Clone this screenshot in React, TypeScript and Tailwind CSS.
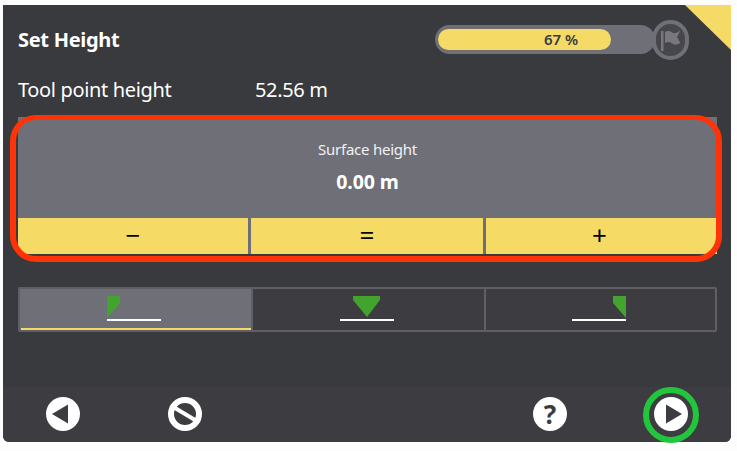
export default function App() {
  const Mark = ({ side }: { side: "l" | "c" | "r" }) => (
    <svg width="56" height="26" viewBox="0 0 56 26" className="block">
      {side === "l" && <polygon points="1,0 14,0 14,7 1,22" fill="#43a32f" />}
      {side === "c" && <polygon points="14,0 41,0 41,4 28,21 14,4" fill="#43a32f" />}
      {side === "r" && <polygon points="42,0 55,0 55,22 42,7" fill="#43a32f" />}
      <rect x="1" y="23" width="54" height="2" fill="#ffffff" />
    </svg>
  );
  return (
    <div className="relative w-[737px] h-[451px] overflow-hidden bg-[#fdfdfd] pt-[5px] pl-[3px] font-['Noto_Sans',sans-serif]">
      <div className="relative w-[728px] h-[437px] bg-[#393a3e] rounded-bl-[6px] rounded-br-[6px] overflow-hidden flex flex-col">
        <svg width="46" height="45" viewBox="0 0 46 45" className="absolute top-0 right-0">
          <polygon points="0,0 46,0 46,45" fill="#f5db66" />
        </svg>
        <div className="flex items-center h-[70px] pl-[15px]">
          <div className="text-[20px] leading-none font-bold text-white tracking-[-0.3px] w-[417px]">Set Height</div>
          <div className="relative w-[220px] h-[29px] rounded-full bg-[#6f6f78] mt-[-1px] pl-[3px] pt-[4px]">
            <div className="w-[173px] h-[21px] rounded-full bg-[#f5db66] flex items-center justify-center pl-[73px] text-[15px] font-semibold text-[#3a3a3e]">67 %</div>
            <div className="absolute right-[-34px] top-[-5px] w-[37px] h-[40px] rounded-full border-[4px] border-[#6f6f78] bg-[#46464b] flex items-center justify-center">
              <svg width="22" height="24" viewBox="0 0 22 24">
                <rect x="1" y="3" width="2.5" height="20" fill="#77777f" />
                <path d="M5 4 Q9 2 12 4.5 Q16 7 20.5 2 L17 9 L20.5 15 Q15 18 12 15.5 Q9 13 5 15 Z" fill="#77777f" />
              </svg>
            </div>
          </div>
        </div>
        <div className="flex items-center h-[30px] pl-[15px] text-[20px] leading-none text-white tracking-[-0.35px]">
          <div className="w-[237px]">Tool point height</div>
          <div>52.56 m</div>
        </div>
        <div className="ml-[15px] mt-[12px] w-[699px] h-[137px] flex flex-col">
          <div className="h-[101px] bg-[#6f6f78] flex flex-col items-center text-white">
            <div className="mt-[25px] text-[15px] leading-none tracking-[-0.25px] text-[#f2f2f2]">Surface height</div>
            <div className="mt-[15px] text-[19.5px] leading-none font-bold tracking-[-0.1px]">0.00 m</div>
          </div>
          <div className="h-[36px] flex gap-[3px] bg-[#6f6f78] text-black text-[26px] leading-none">
            <div className="w-[230px] bg-[#f5db66] flex items-center justify-center pb-[3px]">−</div>
            <div className="w-[232px] bg-[#f5db66] flex items-center justify-center pb-[3px]">=</div>
            <div className="flex-1 bg-[#f5db66] flex items-center justify-center pb-[3px] pr-[4px]">+</div>
          </div>
        </div>
        <div className="ml-[15px] mt-[33px] w-[699px] h-[45px] flex border-2 border-[#5f5f65] rounded-[2px] bg-[#3d3c40]">
          <div className="w-[231px] bg-[#6f6f78] flex flex-col items-center">
            <div className="mt-[7px] h-[27px] mr-[3px]"><Mark side="l" /></div>
            <div className="mt-[5px] w-[230px] h-[2px] bg-[#f5db66]" />
          </div>
          <div className="w-[233px] border-l-2 border-[#5f5f65] flex justify-center pt-[7px] pr-[3px]"><Mark side="c" /></div>
          <div className="flex-1 border-l-2 border-[#5f5f65] flex justify-center pt-[7px] pr-[3px]"><Mark side="r" /></div>
        </div>
        <div className="mt-auto h-[55px] bg-[#3d3c40] relative flex items-center pl-[43px] pb-[1px]">
          <svg width="34" height="34" viewBox="0 0 34 34" className="shrink-0">
            <circle cx="17" cy="17" r="17" fill="#fff" />
            <polygon points="6,17 22,7.5 22,26.5" fill="#3d3c40" />
          </svg>
          <svg width="34" height="34" viewBox="0 0 34 34" className="shrink-0 ml-[88px]">
            <circle cx="17" cy="17" r="14" fill="none" stroke="#fff" strokeWidth="6" />
            <line x1="7" y1="11" x2="27" y2="23" stroke="#fff" strokeWidth="4" />
          </svg>
          <div className="shrink-0 ml-[331px] w-[34px] h-[34px] rounded-full bg-white flex items-center justify-center text-[26px] leading-[34px] font-bold text-[#3d3c40]">?</div>
          <svg width="34" height="34" viewBox="0 0 34 34" className="shrink-0 ml-[87px]">
            <circle cx="17" cy="17" r="17" fill="#fff" />
            <polygon points="28,17 12,7.5 12,26.5" fill="#3d3c40" />
          </svg>
        </div>
      </div>
      <div className="absolute left-[10px] top-[115px] w-[712px] h-[147px] border-x-[6px] border-t-[5px] border-b-[6px] border-[#ff3308] rounded-[26px] pointer-events-none" />
      <div className="absolute left-[643px] top-[387px] w-[56px] h-[56px] border-[6px] border-[#22c63c] rounded-full pointer-events-none" />
    </div>
  );
}
